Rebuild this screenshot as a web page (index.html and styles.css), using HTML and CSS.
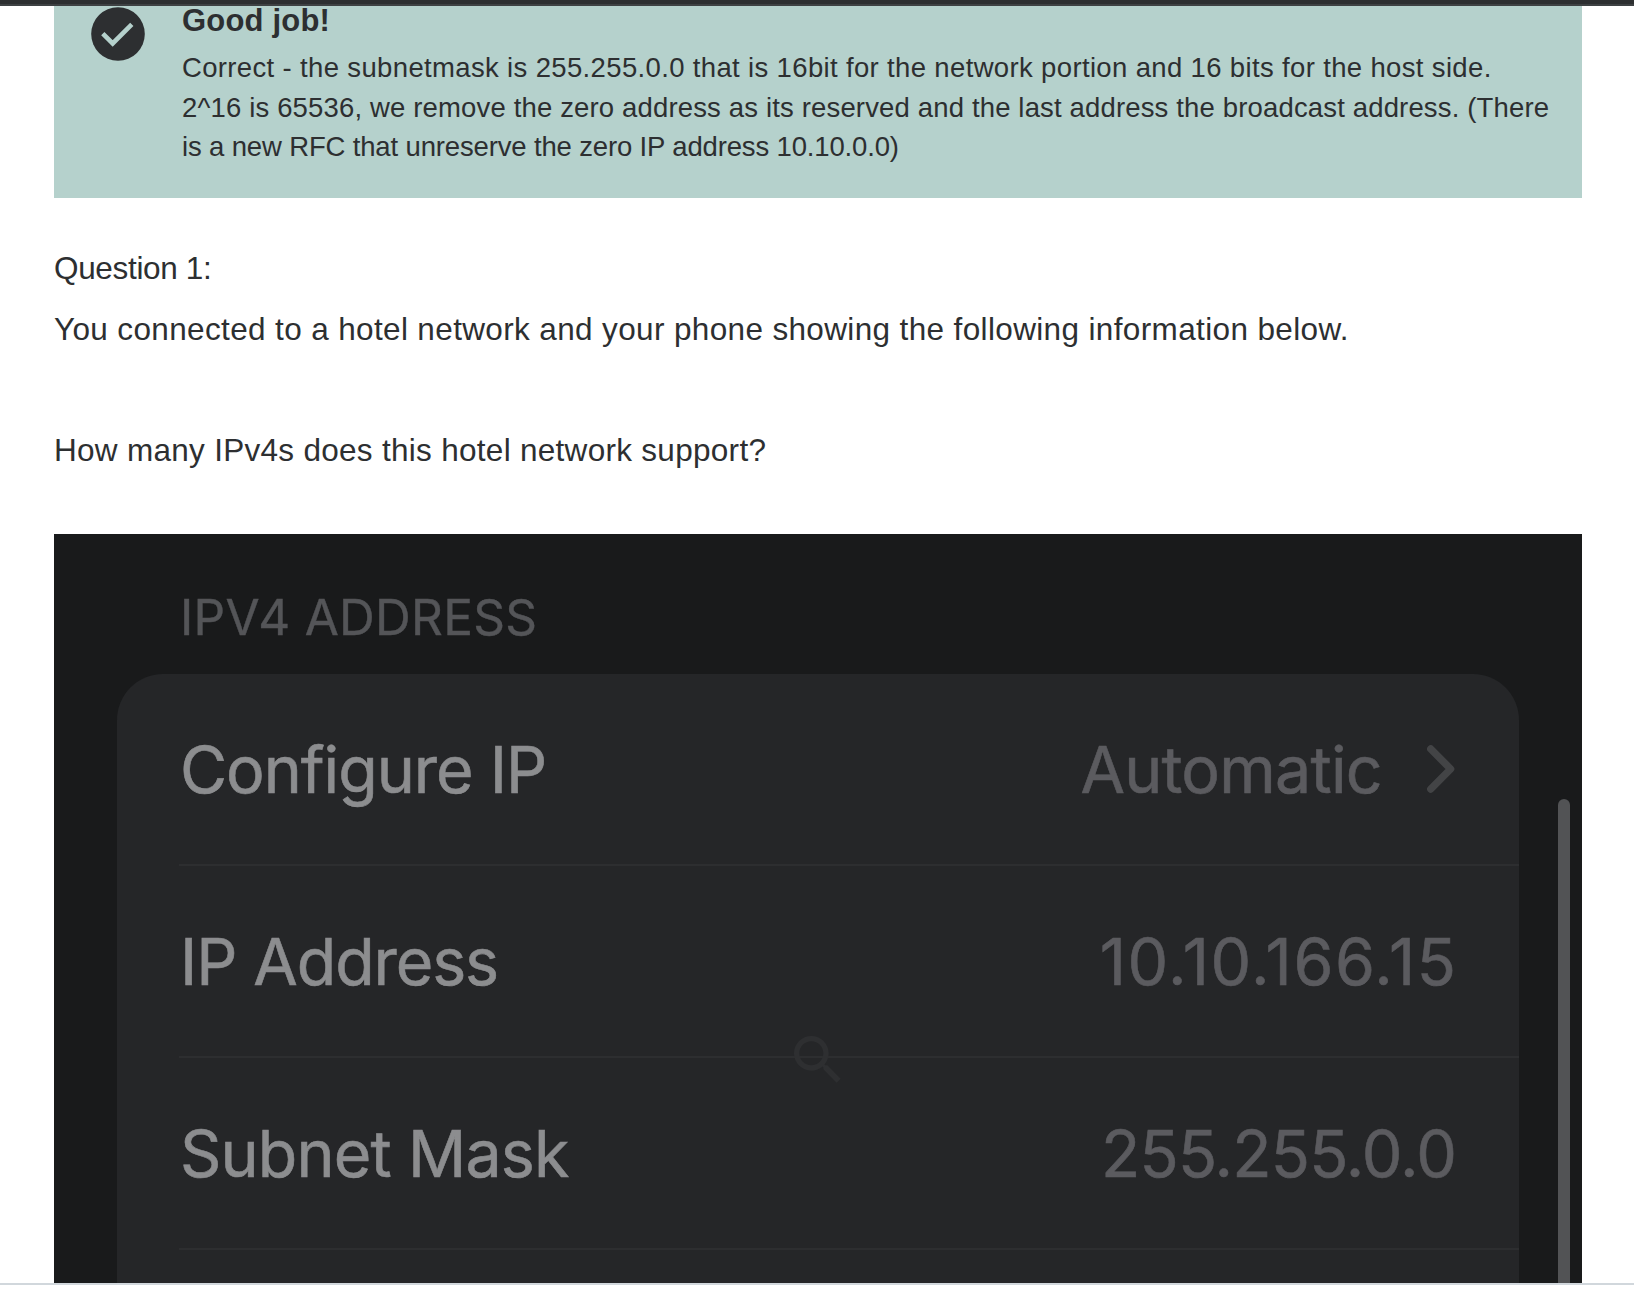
FILE: index.html
```html
<!DOCTYPE html>
<html lang="en">
<head>
<meta charset="utf-8">
<title>Quiz question</title>
<link rel="stylesheet" href="styles.css">
</head>
<body>
<div class="topbar"></div>
<main class="quiz">
  <section class="alert">
    <svg class="alert-icon" viewBox="0 0 64 64" aria-hidden="true">
      <circle cx="32" cy="32" r="26.8" fill="#2d2f31"/>
      <path d="M16.8 31.6 L26.7 41.5 L45.8 22.4" fill="none" stroke="#b5d1cc" stroke-width="4.6"/>
    </svg>
    <div class="alert-body">
      <h2 class="alert-title">Good job!</h2>
      <p class="alert-text"><span class="l1">Correct - the subnetmask is 255.255.0.0 that is 16bit for the network portion and 16 bits for the host side.</span> <span class="l2">2^16 is 65536, we remove the zero address as its reserved and the last address the broadcast address. (There</span> <span class="l3">is a new RFC that unreserve the zero IP address 10.10.0.0)</span></p>
    </div>
  </section>
  <section class="question">
    <p class="q1">Question 1:</p>
    <p class="q2">You connected to a hotel network and your phone showing the following information below.</p>
    <p class="q3">How many IPv4s does this hotel network support?</p>
  </section>
  <section class="phone">
    <h3 class="phone-heading">IPV4 ADDRESS</h3>
    <div class="card">
      <div class="row"><span class="k1">Configure IP</span><span class="value"><span class="v1">Automatic</span><svg class="chevron" viewBox="0 0 28 48" aria-hidden="true"><path d="M3.8 4 L23.6 24 L3.8 44" fill="none" stroke="#434446" stroke-width="7.4" stroke-linecap="round" stroke-linejoin="round"/></svg></span></div>
      <div class="row"><span class="k2">IP Address</span><span class="value v2">10.10.166.15</span></div>
      <div class="row"><span class="k3">Subnet Mask</span><span class="value v3">255.255.0.0</span></div>
    </div>
    <div class="scrollbar"></div>
    <svg class="magnifier" viewBox="0 0 24 24" aria-hidden="true"><path fill="#2e2f31" d="M15.5 14h-.79l-.28-.27C15.41 12.59 16 11.11 16 9.5 16 5.91 13.09 3 9.5 3S3 5.91 3 9.5 5.91 16 9.5 16c1.61 0 3.09-.59 4.23-1.57l.27.28v.79l5 4.99L20.49 19l-4.99-5zm-6 0C7.01 14 5 11.99 5 9.5S7.01 5 9.5 5 14 7.01 14 9.5 11.99 14 9.5 14z"/></svg>
  </section>
</main>
<footer class="bottom"></footer>
</body>
</html>
```
FILE: styles.css
```css
* { box-sizing: border-box; margin: 0; padding: 0; }
body {
  width: 1634px; height: 1294px; overflow: hidden;
  display: flex; flex-direction: column;
  background: #fff; color: #2d2f31;
  font-family: "Liberation Sans", Arial, sans-serif;
}
.topbar { height: 6px; background: #2d2f31; border-bottom: 2px solid #3e4143; flex: none; }
.quiz { flex: none; height: 1277px; padding: 0 52px 0 54px; }
.alert { height: 192px; background: #b5d1cc; display: flex; padding-left: 32px; }
.alert-icon { width: 64px; height: 64px; margin-top: -4px; margin-right: 32px; flex: none; }
.alert-body { white-space: nowrap; }
.alert-title { font-size: 31px; line-height: 30px; height: 42px; letter-spacing: 0.2px; }
.alert-text { font-size: 27.5px; line-height: 39.5px; }
.alert-text span { display: block; }
.l1 { letter-spacing: 0.35px; }
.l2 { letter-spacing: 0.155px; }
.l3 { letter-spacing: -0.15px; }
.question { height: 336px; padding-top: 48px; font-size: 31.5px; line-height: 45px; white-space: nowrap; }
.q1 { letter-spacing: -0.33px; }
.q2 { margin-top: 16px; letter-spacing: 0.36px; }
.q3 { margin-top: 76px; letter-spacing: 0.29px; }
.phone {
  position: relative; height: 749px; background: #191a1b;
  padding: 53px 63px 0; overflow: hidden;
  font-family: Inter, "Liberation Sans", sans-serif;
}
.phone-heading {
  font-size: 49.5px; line-height: 60px; height: 87px; font-weight: 400;
  -webkit-text-stroke: 0.4px currentColor;
  letter-spacing: 0.27px; color: #545558; padding-left: 63px; white-space: nowrap;
}
.card { height: 700px; border-radius: 46px 46px 0 0; background: #252628; padding-left: 62px; }
.row {
  height: 192px; display: flex; justify-content: space-between; align-items: center;
  border-bottom: 2px solid #2d2e30; padding: 2px 63px 0 1px;
  font-size: 64.5px; line-height: 78px; font-weight: 400; color: #8c8d8f; white-space: nowrap;
  -webkit-text-stroke: 0.6px currentColor;
}
.value { display: flex; align-items: center; color: #5b5b5f; }
.k1 { letter-spacing: -1.04px; }
.k2 { letter-spacing: -1.1px; }
.k3 { letter-spacing: -0.85px; }
.v1 { letter-spacing: -0.72px; }
.v2 { letter-spacing: 1.56px; margin-right: -1.5px; }
.v3 { letter-spacing: -0.85px; }
.chevron { width: 28px; height: 48px; margin: -2px 1px 0 45px; }
.scrollbar { position: absolute; left: 1504px; top: 265px; width: 12px; height: 600px; border-radius: 6px; background: #525355; }
.magnifier { position: absolute; left: 732px; top: 494px; width: 64px; height: 64px; }
.bottom { height: 2px; background: #d1d7dc; flex: none; }
```
